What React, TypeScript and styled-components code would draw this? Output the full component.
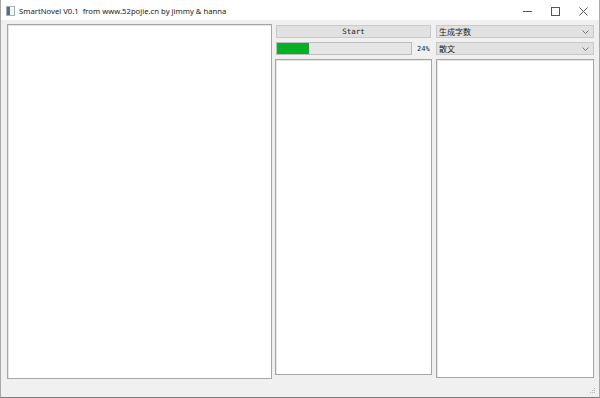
import React from "react";
import styled, { createGlobalStyle } from "styled-components";

const GlobalStyle = createGlobalStyle`
  html, body {
    margin: 0;
    padding: 0;
    background: #ffffff;
  }
`;

function App() {
  const progress = 24;

  return (
    <>
      <GlobalStyle />
      <Window>
        <TitleBar>
          <AppIcon width="9" height="10" viewBox="0 0 9 10">
            <rect x="0.5" y="0.5" width="8" height="9" fill="#f4f6f6" stroke="#a7b0b3" />
            <rect x="1" y="1" width="3" height="8" fill="#4a7480" />
          </AppIcon>
          <Title>SmartNovel V0.1&nbsp;&nbsp;from www.52pojie.cn by jimmy &amp; hanna</Title>
          <WindowButtons>
            <WindowButton>
              <svg width="9" height="9" viewBox="0 0 9 9">
                <path d="M0 4.5H9" stroke="#555" strokeWidth="1" />
              </svg>
            </WindowButton>
            <WindowButton>
              <svg width="9" height="9" viewBox="0 0 9 9">
                <rect x="0.5" y="0.5" width="8" height="8" fill="none" stroke="#555" />
              </svg>
            </WindowButton>
            <WindowButton>
              <svg width="9" height="9" viewBox="0 0 9 9">
                <path d="M0.5 0.5L8.5 8.5M8.5 0.5L0.5 8.5" stroke="#555" strokeWidth="1" />
              </svg>
            </WindowButton>
          </WindowButtons>
        </TitleBar>

        <Body>
          <TextPane $bottom={0} />

          <Column>
            <PushButton>Start</PushButton>
            <ProgressRow>
              <ProgressTrack>
                <ProgressFill style={{ width: `${progress}%` }} />
              </ProgressTrack>
              <ProgressLabel>{progress}%</ProgressLabel>
            </ProgressRow>
            <TextPane $bottom={4} />
          </Column>

          <Column>
            <Combo>
              <span>生成字数</span>
              <Chevron />
            </Combo>
            <Combo>
              <span>散文</span>
              <Chevron />
            </Combo>
            <TextPane $bottom={1} />
          </Column>
        </Body>

        <SizeGrip width="6" height="6" viewBox="0 0 6 6">
          <rect x="4" y="0" width="1" height="1" fill="#b0b0b0" />
          <rect x="2" y="2" width="1" height="1" fill="#b0b0b0" />
          <rect x="4" y="2" width="1" height="1" fill="#b0b0b0" />
          <rect x="0" y="4" width="1" height="1" fill="#b0b0b0" />
          <rect x="2" y="4" width="1" height="1" fill="#b0b0b0" />
          <rect x="4" y="4" width="1" height="1" fill="#b0b0b0" />
        </SizeGrip>
      </Window>
    </>
  );
}

function Chevron() {
  return (
    <ChevronIcon width="7" height="4" viewBox="0 0 7 4">
      <path d="M0.5 0.5L3.5 3.5L6.5 0.5" fill="none" stroke="#777" strokeWidth="1" />
    </ChevronIcon>
  );
}

const Window = styled.div`
  position: relative;
  width: 600px;
  height: 398px;
  box-sizing: border-box;
  background: #f0f0f0;
  border-left: 1px solid #a8a8a8;
  border-right: 1px solid #a8a8a8;
  border-bottom: 1px solid #7c7c7c;
  display: flex;
  flex-direction: column;
  overflow: hidden;
`;

const TitleBar = styled.div`
  height: 20px;
  flex-shrink: 0;
  background: #ffffff;
  display: flex;
  align-items: center;
`;

const AppIcon = styled.svg`
  margin-left: 5px;
  margin-top: 1px;
`;

const Title = styled.div`
  margin-left: 4px;
  font-family: "Noto Sans", "Liberation Sans", sans-serif;
  font-size: 7.7px;
  color: #1a1a1a;
  white-space: nowrap;
  padding-top: 1px;
`;

const WindowButtons = styled.div`
  margin-left: auto;
  display: flex;
  height: 20px;
  margin-right: 2px;
`;

const WindowButton = styled.div`
  width: 28px;
  height: 20px;
  display: flex;
  align-items: center;
  justify-content: center;
  margin-top: 1px;
`;

const Body = styled.div`
  flex: 1;
  display: grid;
  grid-template-columns: 265px 157px 159px;
  column-gap: 3px;
  padding: 4px 0 18px 6px;
  box-sizing: border-box;
  min-height: 0;

  & > :nth-child(3) {
    margin-left: 1px;
  }
`;

const Column = styled.div`
  display: flex;
  flex-direction: column;
  min-height: 0;
  padding-top: 1px;
`;

const TextPane = styled.div<{ $bottom: number }>`
  flex: 1;
  box-sizing: border-box;
  background: #ffffff;
  border: 1px solid #a6a6a6;
  box-shadow: inset 1px 1px 0 #e6e6e6;
  margin-bottom: ${(p) => p.$bottom}px;
  min-height: 0;
`;

const PushButton = styled.div`
  height: 13px;
  margin: 0 1px 4px 1px;
  box-sizing: border-box;
  background: #e1e1e1;
  border: 1px solid #c9c9c9;
  display: flex;
  align-items: center;
  justify-content: center;
  font-family: "DejaVu Sans Mono", "Liberation Mono", monospace;
  font-size: 7.5px;
  color: #222;
`;

const ProgressRow = styled.div`
  height: 13px;
  margin-bottom: 4px;
  display: flex;
  align-items: center;
  padding-left: 1px;
`;

const ProgressTrack = styled.div`
  width: 136px;
  height: 13px;
  box-sizing: border-box;
  background: #e6e6e6;
  border: 1px solid #bcbcbc;
  overflow: hidden;
`;

const ProgressFill = styled.div`
  height: 100%;
  background: #06b025;
`;

const ProgressLabel = styled.span`
  margin-left: 5px;
  font-family: "DejaVu Sans Mono", "Liberation Mono", monospace;
  font-size: 7px;
  color: #222;
`;

const Combo = styled.div`
  height: 13px;
  margin-bottom: 4px;
  box-sizing: border-box;
  background: #e1e1e1;
  border: 1px solid #c9c9c9;
  display: flex;
  align-items: center;
  justify-content: space-between;
  padding: 0 4px 0 2px;
  font-family: "Noto Sans CJK SC", "Noto Sans", sans-serif;
  font-size: 8px;
  color: #222;
`;

const ChevronIcon = styled.svg`
  display: block;
`;

const SizeGrip = styled.svg`
  position: absolute;
  right: 3px;
  bottom: 3px;
`;

export default App;
